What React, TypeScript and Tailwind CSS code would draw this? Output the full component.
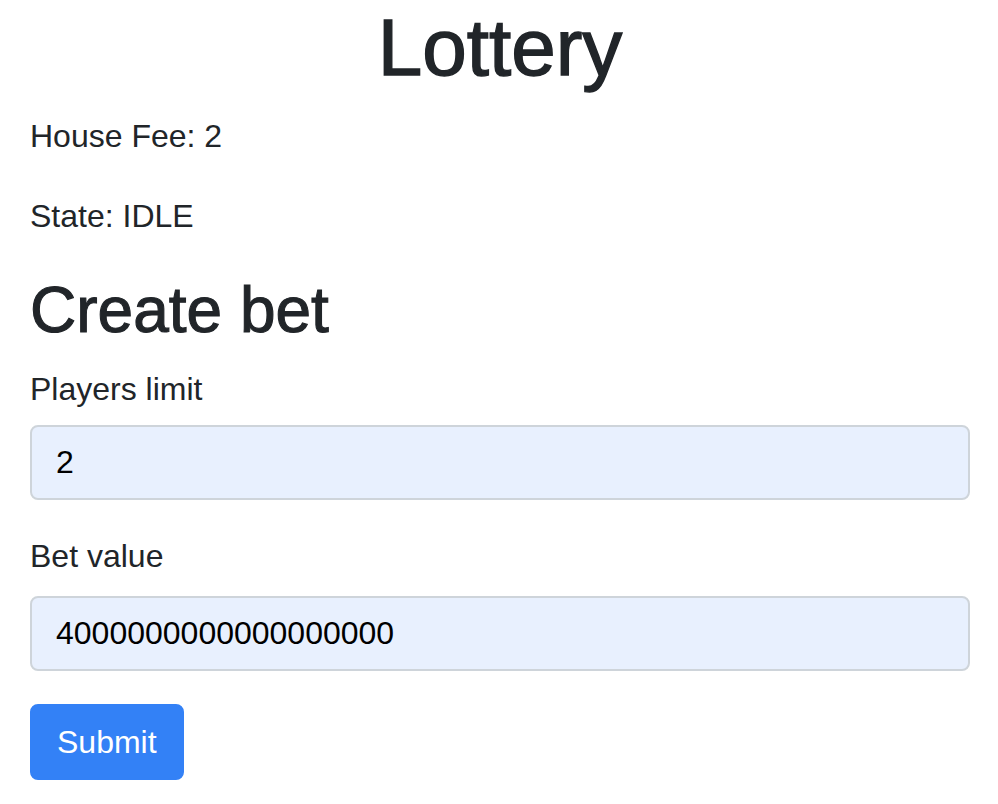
import { useState } from "react";

export default function App() {
  const [playersLimit, setPlayersLimit] = useState("2");
  const [betValue, setBetValue] = useState("4000000000000000000");

  return (
    <div className="min-h-screen bg-white pl-[30px] pr-[28px] text-[32px] leading-[1.5] text-[#212529] font-['Liberation_Sans',Arial,sans-serif]">
      <h1 className="mb-4 text-center text-[80px] leading-[1.2] [-webkit-text-stroke:1.4px_#212529]">Lottery</h1>
      <p className="mb-8">House Fee: 2</p>
      <p className="mb-8">State: IDLE</p>

      <h2 className="mb-4 text-[64px] leading-[1.2] [-webkit-text-stroke:1.1px_#212529]">Create bet</h2>
      <form onSubmit={(e) => e.preventDefault()}>
        <div className="mb-8">
          <label className="mb-3 block">Players limit</label>
          <input
            value={playersLimit}
            onChange={(e) => setPlayersLimit(e.target.value)}
            className="block h-[75px] w-full rounded-lg border-2 border-[#ced4da] bg-[#e8f0fe] px-6 text-black outline-none"
          />
        </div>
        <div className="mb-[33px]">
          <label className="mb-4 block">Bet value</label>
          <input
            value={betValue}
            onChange={(e) => setBetValue(e.target.value)}
            className="block h-[75px] w-full rounded-lg border-2 border-[#ced4da] bg-[#e8f0fe] px-6 text-black outline-none"
          />
        </div>
        <button
          type="submit"
          className="h-[76px] rounded-lg border-2 border-[#3381f6] bg-[#3381f6] px-[25px] text-white"
        >
          Submit
        </button>
      </form>
    </div>
  );
}
